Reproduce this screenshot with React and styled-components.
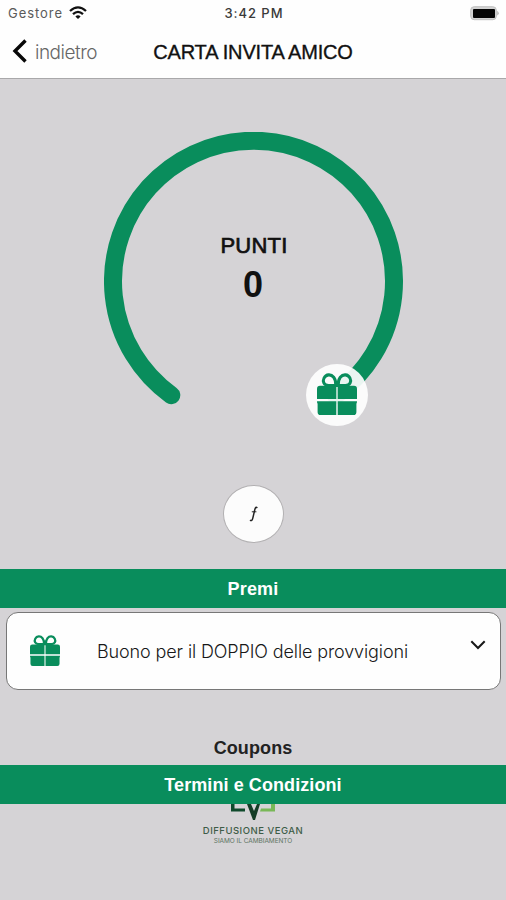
import React from "react";
import styled, { createGlobalStyle } from "styled-components";

const green = "#098d5c";

const GlobalStyle = createGlobalStyle`
  * { box-sizing: border-box; }
  body { margin: 0; background: #d5d3d6; }
`;

const Screen = styled.div`
  width: 506px;
  height: 900px;
  overflow: hidden;
  display: flex;
  flex-direction: column;
  background: #d5d3d6;
  color: #111;
  font-family: "Liberation Sans", Arial, sans-serif;
  white-space: nowrap;
`;

const StatusBar = styled.div`
  height: 26px;
  flex: none;
  display: grid;
  grid-template-columns: 1fr auto 1fr;
  align-items: center;
  padding: 0 7px 0 8px;
  background: #fefefe;
`;

const Carrier = styled.div`
  display: flex;
  align-items: center;
  gap: 6px;
  font: 400 13px/26px Inter, sans-serif;
  letter-spacing: 0.95px;
  color: #5a5a5a;
  svg { margin-top: -2px; }
`;

const Clock = styled.div`
  font: 500 13px/26px Inter, sans-serif;
  letter-spacing: 0.95px;
  margin-left: 1px;
  color: #3a3a3a;
`;

const BatteryIcon = styled.svg`
  justify-self: end;
`;

const NavBar = styled.header`
  height: 53px;
  flex: none;
  display: grid;
  grid-template-columns: 1fr auto 1fr;
  align-items: center;
  padding: 0 12px;
  background: #fefefe;
  border-bottom: 1px solid #a9a8aa;
`;

const BackButton = styled.button`
  display: flex;
  align-items: center;
  gap: 7px;
  padding: 0;
  border: 0;
  background: none;
  color: #666;
  font: 300 19px/26px Inter, sans-serif;
  letter-spacing: -0.5px;
  svg { margin-top: -3px; }
  span { padding-top: 2px; }
`;

const Title = styled.h1`
  margin: 0;
  font-size: 20px;
  font-weight: 400;
  line-height: 26px;
  letter-spacing: -0.15px;
  -webkit-text-stroke: 0.35px #111;
`;

const Gauge = styled.section`
  position: relative;
  width: 300px;
  height: 300px;
  flex: none;
  margin: 53px 0 0 104px;
  display: grid;
  place-items: start center;
  > * { grid-area: 1 / 1; }
`;

const Points = styled.div`
  padding-top: 101px;
  display: flex;
  flex-direction: column;
  align-items: center;
`;

const PointsLabel = styled.div`
  font-size: 22px;
  line-height: 26px;
  letter-spacing: 0.2px;
  -webkit-text-stroke: 0.7px #111;
`;

const PointsValue = styled.div`
  font-size: 36px;
  font-weight: 700;
  line-height: 42px;
  margin: 5px 2px 0 0;
`;

const PrizeBadge = styled.div`
  position: absolute;
  left: 202px;
  top: 232px;
  width: 62px;
  height: 62px;
  border-radius: 50%;
  display: grid;
  place-items: center;
  padding-bottom: 3px;
  background: rgba(254, 254, 254, 0.92);
`;

const RoundButton = styled.button`
  width: 61px;
  height: 58px;
  flex: none;
  margin: 53px 0 0 223px;
  padding: 0;
  display: grid;
  place-items: center;
  border: 1px solid #b2b0b2;
  border-radius: 50%;
  background: #fcfcfc;
`;

const SectionBar = styled.div`
  height: 39px;
  flex: none;
  margin-top: ${(p) => p.$gap}px;
  padding-top: 1px;
  display: flex;
  align-items: center;
  justify-content: center;
  background: ${green};
  color: #fff;
  font-size: 18px;
  font-weight: 700;
  letter-spacing: ${(p) => p.$spacing}px;
`;

const PrizeCard = styled.div`
  height: 78px;
  flex: none;
  margin: 4px 5px 0 6px;
  padding: 0 14px 2px 23px;
  display: grid;
  grid-template-columns: 67px 1fr 16px;
  align-items: center;
  border: 1px solid #777;
  border-radius: 12px;
  background: #fefefe;
`;

const PrizeName = styled.div`
  padding-top: 3px;
  font: 300 18px/24px Inter, sans-serif;
  color: #181818;
  letter-spacing: -0.12px;
`;

const ChevronSlot = styled.div`
  display: flex;
  padding-bottom: 11px;
`;

const CouponsTitle = styled.h2`
  margin: 48px 0 0;
  height: 20px;
  font-size: 18px;
  font-weight: 700;
  line-height: 21px;
  text-align: center;
  letter-spacing: 0.1px;
  color: #222;
`;

const Brand = styled.footer`
  display: flex;
  flex-direction: column;
  align-items: center;
  svg { display: block; }
`;

const BrandName = styled.div`
  margin-top: 4px;
  font: 500 9.5px/12px Inter, sans-serif;
  letter-spacing: 0.5px;
  color: #3d5c47;
`;

const BrandMotto = styled.div`
  font: 400 6.5px/8px Inter, sans-serif;
  letter-spacing: -0.05px;
  color: #5d7463;
`;

function GiftIcon({ width, height }) {
  return (
    <svg width={width} height={height} viewBox="0 0 40 41" preserveAspectRatio="none">
      <g fill="none" stroke={green} strokeWidth="3">
        <path d="M18.8 12.2H11.5C6.5 12 5.5 8 7 5C9 1 14 0.8 16.7 4.2C18.5 6.5 19 9.5 18.8 12.2Z" />
        <path d="M21.2 12.2H28.5C33.5 12 34.5 8 33 5C31 1 26 0.8 23.3 4.2C21.5 6.5 21 9.5 21.2 12.2Z" />
      </g>
      <path
        fill={green}
        d="M3 12.5H19.3V25.5H0V15.5Q0 12.5 3 12.5ZM20.7 12.5H37Q40 12.5 40 15.5V25.5H20.7ZM0 27.5H19.3V41H3.5Q.6 41 .6 38V30Q0 29 0 27.5ZM20.7 27.5H40Q40 29 39.4 30V38Q39.4 41 36.5 41H20.7Z"
      />
    </svg>
  );
}

export default function App() {
  return (
    <>
      <GlobalStyle />
      <Screen>
        <StatusBar>
          <Carrier>
            <span>Gestore</span>
            <svg width="18" height="13" viewBox="0 0 18 13" fill="none" stroke="#111" strokeWidth="2.3">
              <path d="M1 5Q9-2.3 17 5M4 8.2Q9 3.6 14 8.2" />
              <path d="M6.4 10.4Q9 8.2 11.6 10.4L9 13Z" fill="#111" stroke="none" />
            </svg>
          </Carrier>
          <Clock>3:42 PM</Clock>
          <BatteryIcon width="29" height="15" viewBox="0 0 29 15">
            <rect x=".7" y=".7" width="25.6" height="13" rx="3.5" fill="#d3d3d3" stroke="#c0c0c0" />
            <rect x="3" y="3" width="22" height="9" rx="1" fill="#050505" />
            <path d="M27.3 4.8Q30 7.2 27.3 9.6Z" fill="#aaa" />
          </BatteryIcon>
        </StatusBar>
        <NavBar>
          <BackButton>
            <svg width="16" height="24" viewBox="0 0 16 24" fill="none" stroke="#080808" strokeWidth="3.4">
              <path d="M13.5 1.5L3 12L13.5 22.5" />
            </svg>
            <span>indietro</span>
          </BackButton>
          <Title>CARTA INVITA AMICO</Title>
        </NavBar>
        <Gauge>
          <svg width="300" height="300" viewBox="0 0 300 300">
            <path
              d="M67.3 263.2A140.5 140.5 0 1 1 231.7 263.2"
              fill="none"
              stroke={green}
              strokeWidth="18"
              strokeLinecap="round"
            />
          </svg>
          <Points>
            <PointsLabel>PUNTI</PointsLabel>
            <PointsValue>0</PointsValue>
          </Points>
          <PrizeBadge>
            <GiftIcon width={40} height={42} />
          </PrizeBadge>
        </Gauge>
        <RoundButton aria-label="Info">
          <svg width="10" height="18" viewBox="0 0 10 18" fill="none" stroke="#222">
            <path d="M8.3 3Q6.6 1.2 5.8 4.6L3.8 13.2Q3 16.6 1 15.2" strokeWidth="1.5" />
            <path d="M2.8 6.8H7.4" />
          </svg>
        </RoundButton>
        <SectionBar $gap={26} $spacing={0.15}>Premi</SectionBar>
        <PrizeCard>
          <GiftIcon width={30} height={31} />
          <PrizeName>Buono per il DOPPIO delle provvigioni</PrizeName>
          <ChevronSlot>
            <svg width="16" height="10" viewBox="0 0 16 10" fill="none" stroke="#181818" strokeWidth="2">
              <path d="M1.3 1.2L8 8L14.7 1.2" />
            </svg>
          </ChevronSlot>
        </PrizeCard>
        <CouponsTitle>Coupons</CouponsTitle>
        <SectionBar $gap={7} $spacing={0.08}>Termini e Condizioni</SectionBar>
        <Brand>
          <svg width="46" height="17" viewBox="0 0 46 17">
            <path d="M1 0H4.5V4.5H15V7.5H1Z" fill="#104a2c" />
            <path d="M17 0H21L24 7L27 0H30L25 16H23Z" fill="#143c26" />
            <path d="M30 7.5L31 4.5H41V0H45V7.5Z" fill="#79b857" />
          </svg>
          <BrandName>DIFFUSIONE VEGAN</BrandName>
          <BrandMotto>SIAMO IL CAMBIAMENTO</BrandMotto>
        </Brand>
      </Screen>
    </>
  );
}
